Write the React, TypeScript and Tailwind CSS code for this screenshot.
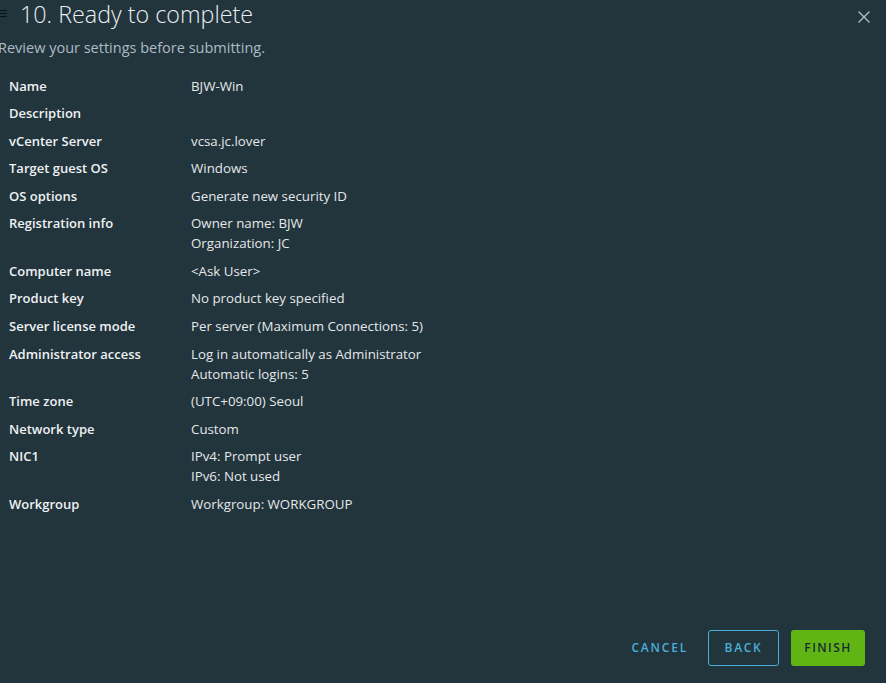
import React from 'react';

const rows: { label: string; value: string[] }[] = [
  { label: 'Name', value: ['BJW-Win'] },
  { label: 'Description', value: [''] },
  { label: 'vCenter Server', value: ['vcsa.jc.lover'] },
  { label: 'Target guest OS', value: ['Windows'] },
  { label: 'OS options', value: ['Generate new security ID'] },
  { label: 'Registration info', value: ['Owner name: BJW', 'Organization: JC'] },
  { label: 'Computer name', value: ['<Ask User>'] },
  { label: 'Product key', value: ['No product key specified'] },
  { label: 'Server license mode', value: ['Per server (Maximum Connections: 5)'] },
  { label: 'Administrator access', value: ['Log in automatically as Administrator', 'Automatic logins: 5'] },
  { label: 'Time zone', value: ['(UTC+09:00) Seoul'] },
  { label: 'Network type', value: ['Custom'] },
  { label: 'NIC1', value: ['IPv4: Prompt user', 'IPv6: Not used'] },
  { label: 'Workgroup', value: ['Workgroup: WORKGROUP'] },
];

export default function App() {
  return (
    <div
      className="w-[886px] h-[683px] bg-[#22343c] text-[#e9ecef] flex flex-col overflow-hidden"
      style={{ fontFamily: '"Open Sans", Lato, sans-serif' }}
    >
      {/* Header */}
      <div className="flex items-start h-[30px]">
        <div className="flex flex-col gap-[2px] mt-[10px] w-[7px]">
          <span className="block h-[1px] bg-[#0b1215]" />
          <span className="block h-[1px] bg-[#0b1215]" />
          <span className="block h-[1px] bg-[#0b1215]" />
        </div>
        <h1 className="ml-[13px] text-[23.3px] leading-[28px] font-light text-[#eaeef0]">
          10. Ready to complete
        </h1>
        <button className="ml-auto mr-[14px] mt-[9px] text-[#adbbc4]">
          <svg width="16" height="16" viewBox="0 0 16 16" fill="none" stroke="currentColor" strokeWidth="1.4">
            <path d="M2.5 2.5 L13.5 13.5 M13.5 2.5 L2.5 13.5" />
          </svg>
        </button>
      </div>
      <p className="-ml-[2px] mt-[8px] text-[14.5px] leading-[20px] text-[#adbbc4]">
        Review your settings before submitting.
      </p>

      {/* Summary */}
      <div className="mt-[14px] pl-[9px] text-[13px]">
        {rows.map((r) => (
          <div key={r.label} className="flex py-[3.77px] leading-[20px]">
            <div className="w-[182px] font-semibold text-[#eef1f3]">{r.label}</div>
            <div className="flex flex-col text-[13.3px] text-[#e4e8ea]">
              {r.value.map((v, i) => (
                <span key={i} className="min-h-[20px]">{v}</span>
              ))}
            </div>
          </div>
        ))}
      </div>

      {/* Footer */}
      <div className="mt-auto mb-[17px] mr-[21px] flex items-center justify-end gap-[12px]">
        <button className="px-[8px] h-[36px] text-[12px] font-semibold tracking-[0.15em] text-[#49afd9]">
          CANCEL
        </button>
        <button className="w-[71px] h-[36px] rounded-[3px] border border-[#49afd9] text-[12px] font-semibold tracking-[0.14em] text-[#49afd9]">
          BACK
        </button>
        <button className="w-[74px] h-[36px] rounded-[3px] bg-[#60b515] text-[12px] font-semibold tracking-[0.12em] text-[#1b2a32]">
          FINISH
        </button>
      </div>
    </div>
  );
}
